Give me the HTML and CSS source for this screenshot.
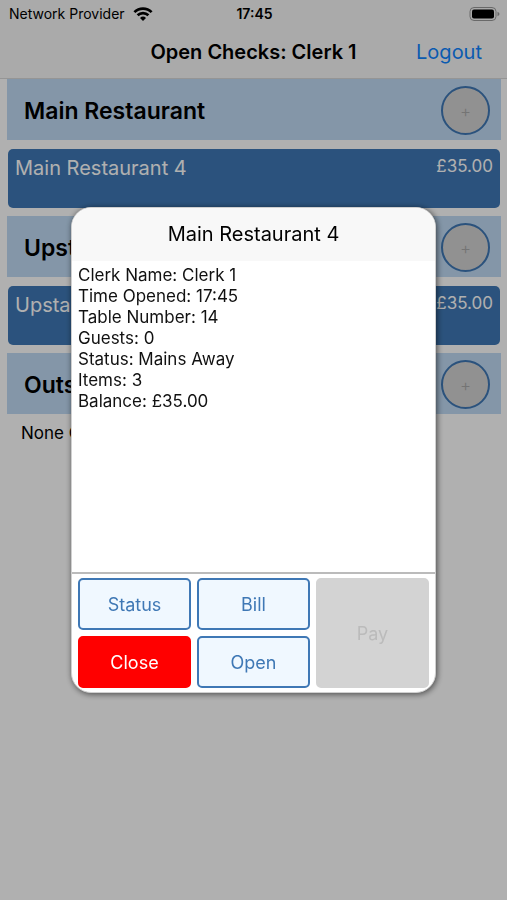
FILE: index.html
```html
<!DOCTYPE html>
<html lang="en">
<head>
  <meta charset="UTF-8" />
  <meta name="viewport" content="width=device-width, initial-scale=1" />
  <title>Open Checks</title>
  <link rel="stylesheet" href="styles.css">
</head>
<body>
  <div class="status-bar">
    <div class="carrier">
      <span>Network Provider</span>
      <svg class="wifi" viewBox="0 0 20 14" width="20" height="14">
        <path d="M1.4 5.1a12.2 12.2 0 0 1 17.2 0M4.6 8.3a7.7 7.7 0 0 1 10.8 0" fill="none" stroke="#000" stroke-width="2.7" />
        <path d="M10 14L7 11a4.3 4.3 0 0 1 6 0z" />
      </svg>
    </div>
    <span class="time">17:45</span>
    <svg class="battery" viewBox="0 0 31 14" width="31" height="14">
      <rect x="1" y=".5" width="26" height="13" rx="4" fill="none" stroke="#999" />
      <rect x="3" y="2.5" width="22" height="9" rx="2" />
      <path d="M28.5 4.7q2 .8 2 2.3t-2 2.3z" fill="#999" />
    </svg>
  </div>
  <header class="navbar">
    <h1>Open Checks: Clerk 1</h1>
    <button class="logout">Logout</button>
  </header>
  <main class="checks">
    <section>
      <div class="area">
        <h2>Main Restaurant</h2>
        <button class="add" aria-label="Add check to Main Restaurant">+</button>
      </div>
      <button class="check"><span>Main Restaurant 4</span><span class="amount">£35.00</span></button>
    </section>
    <section>
      <div class="area">
        <h2>Upstairs</h2>
        <button class="add" aria-label="Add check to Upstairs">+</button>
      </div>
      <button class="check"><span>Upstairs 1</span><span class="amount">£35.00</span></button>
    </section>
    <section>
      <div class="area">
        <h2>Outside</h2>
        <button class="add" aria-label="Add check to Outside">+</button>
      </div>
      <p class="none">None Open</p>
    </section>
  </main>

  <div class="overlay">
    <div class="modal" role="dialog" aria-labelledby="modal-title">
      <h3 class="modal-title" id="modal-title">Main Restaurant 4</h3>
      <div class="details">
        <div>Clerk Name: Clerk 1</div>
        <div>Time Opened: 17:45</div>
        <div>Table Number: 14</div>
        <div>Guests: 0</div>
        <div>Status: Mains Away</div>
        <div>Items: 3</div>
        <div>Balance: £35.00</div>
      </div>
      <div class="actions">
        <button class="btn">Status</button>
        <button class="btn">Bill</button>
        <button class="btn pay" disabled>Pay</button>
        <button class="btn close">Close</button>
        <button class="btn">Open</button>
      </div>
    </div>
  </div>
</body>
</html>
```

FILE: styles.css
```css
* { box-sizing: border-box; }
body { margin: 0; min-height: 100vh; background: #fff; color: #000; font-family: Inter, "Liberation Sans", sans-serif; }
button { font-family: inherit; margin: 0; cursor: pointer; }
h1, h2, h3, p { margin: 0; }

.status-bar { display: grid; grid-template-columns: 1fr auto 1fr; align-items: center; height: 26px; padding: 1px 7px 0 9px; background: #f7f7f7; font-size: 14px; }
.carrier { display: flex; align-items: center; gap: 8px; }
.time { font-weight: 600; }
.battery { justify-self: end; }

.navbar { display: grid; grid-template-columns: 1fr auto 1fr; align-items: center; height: 53px; padding: 0 25px; background: #f7f7f7; border-bottom: 1px solid #d8d8d8; }
.navbar h1 { grid-column: 2; font-size: 20px; font-weight: 600; }
.logout { justify-self: end; padding: 0; border: 0; background: none; color: #0f84ff; font-size: 20px; }

.checks { padding: 0 6px 0 7px; }
.area { display: flex; align-items: center; justify-content: space-between; height: 61px; padding: 2px 11px 0 17px; background: #bfdaf4; }
.area h2 { font-size: 23px; font-weight: 600; }
.add { width: 49px; height: 49px; padding: 0; border: 2px solid #3f78b5; border-radius: 50%; background: #d3d3d3; color: #a8a8a8; font-size: 17px; font-weight: 300; }
.check { display: flex; align-items: flex-start; justify-content: space-between; width: calc(100% - 2px); height: 59px; margin: 9px 1px 8px; padding: 7px; border: 0; border-radius: 5px; background: #3f78b5; color: #fff; font-size: 20px; line-height: 24px; }
.amount { font-size: 17px; line-height: 20px; }
.none { padding: 9px 14px; font-size: 17px; line-height: 21px; }

.overlay { position: fixed; inset: 0; display: flex; align-items: center; justify-content: center; background: rgba(0,0,0,0.31); }
.modal { display: flex; flex-direction: column; width: 72%; height: 54%; overflow: hidden; background: #fff; border: 1px solid #d0d0d0; border-radius: 20px; box-shadow: 1px 1px 6px rgba(0,0,0,0.6); }
.modal-title { padding: 13px 14px; background: #f8f8f8; text-align: center; font-size: 20px; font-weight: 400; line-height: 27px; }
.details { flex: 1; padding: 4px 6px; color: #111; font-size: 17px; line-height: 21px; }
.actions { display: grid; grid-template-columns: repeat(3, 1fr); grid-auto-rows: 52px; gap: 6px; padding: 4px 6px; border-top: 2px solid #bbb; }
.btn { padding: 0; border: 2px solid #3f78b5; border-radius: 5px; background: #f0f8ff; color: #3f78b5; font-size: 18px; }
.pay { grid-column: 3; grid-row: 1 / 3; border-color: #d3d3d3; background: #d3d3d3; color: #bbb; }
.close { border-color: #f00; background: #f00; color: #fff; }
```
